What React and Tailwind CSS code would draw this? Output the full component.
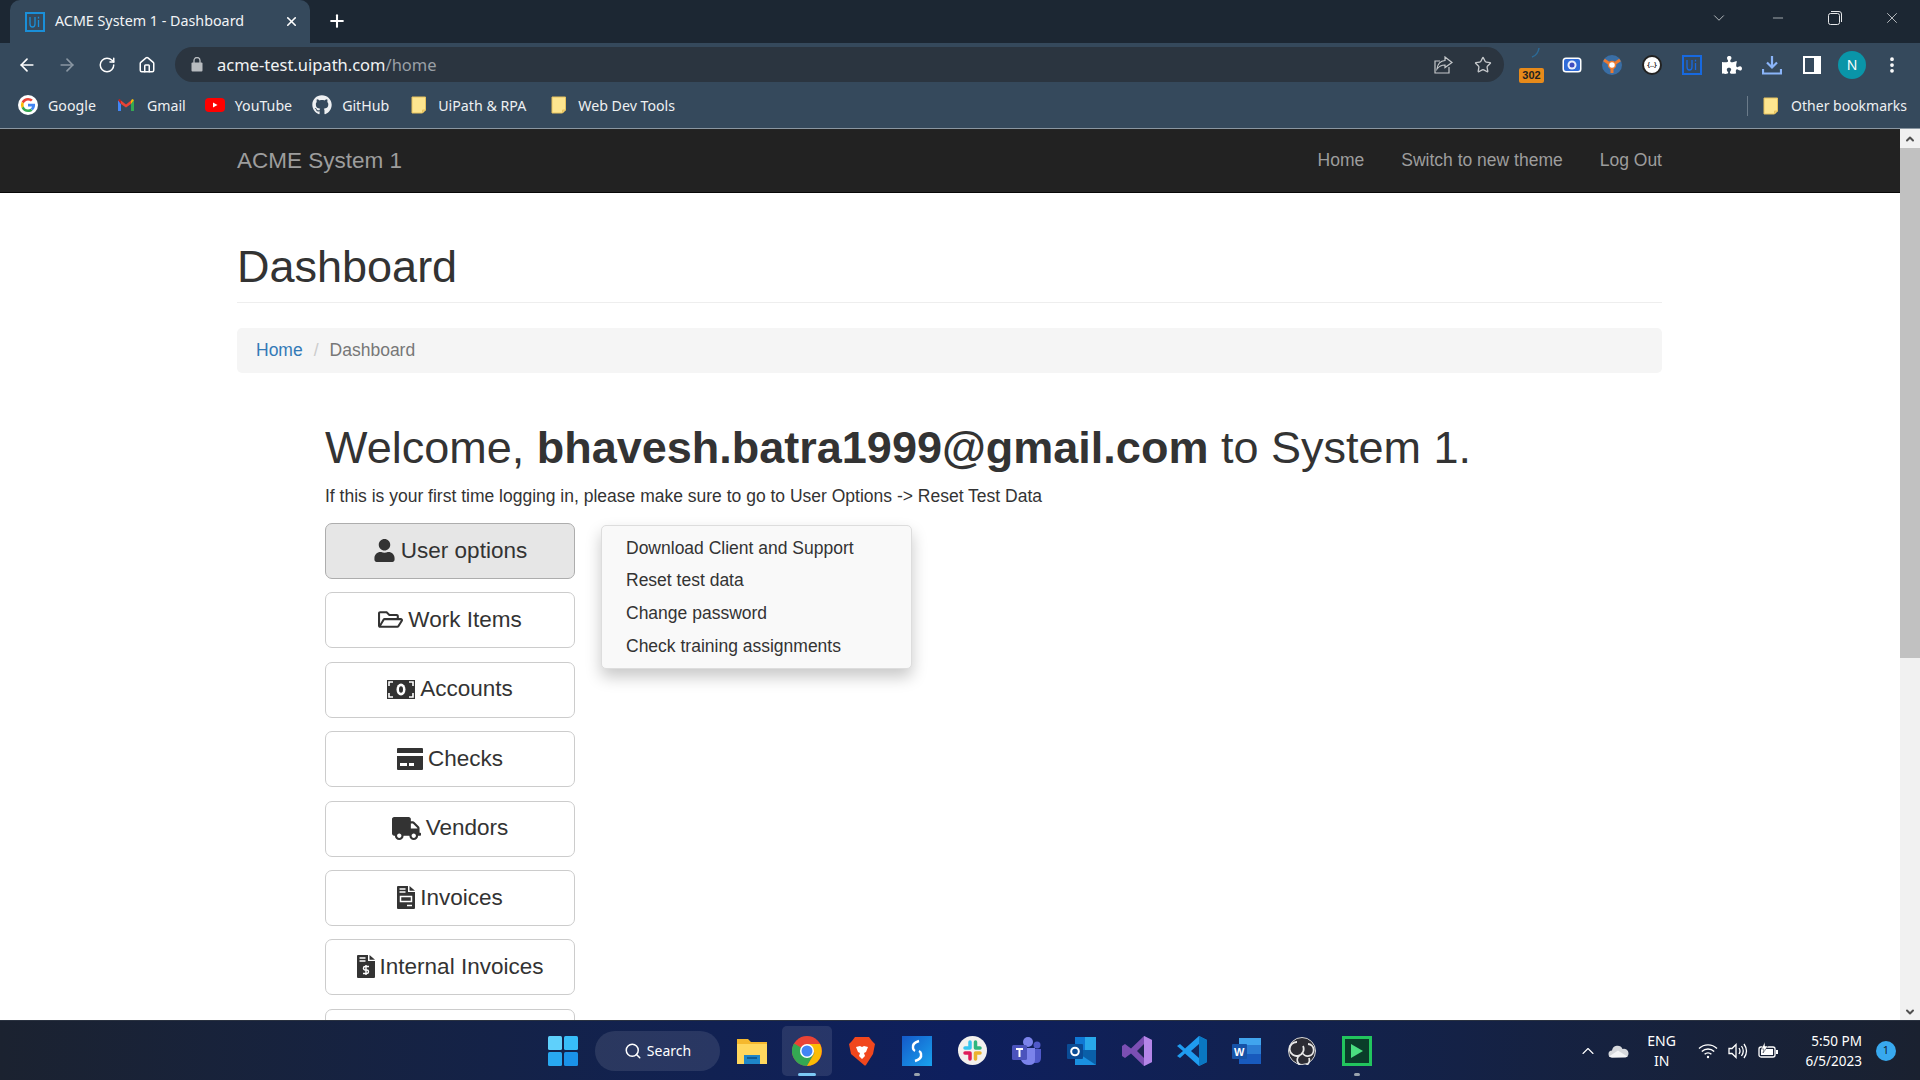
import { FaUser, FaRegFolderOpen, FaTruck, FaGithub, FaPuzzlePiece } from 'react-icons/fa';
import { ArrowLeft, ArrowRight, RotateCw, Home, Star, X, Plus, ChevronDown, ChevronUp, Minus, Search, MoreVertical } from 'lucide-react';

function MoneyGlyph() {
  return (
    <svg width="28" height="19" viewBox="0 0 28 19">
      <rect width="28" height="19" fill="#333" />
      <ellipse cx="14" cy="9.500" rx="4.500" ry="6" fill="#fff" />
      <ellipse cx="14" cy="9.500" rx="2" ry="3.200" fill="#333" />
      <path d="M2 6V2h4M22 2h4v4M26 13v4h-4M6 17H2v-4" fill="none" stroke="#fff" strokeWidth="1.600" />
    </svg>
  );
}

function CardGlyph() {
  return (
    <svg width="26" height="22" viewBox="0 0 26 22">
      <path d="M1 0h24a1 1 0 0 1 1 1v4H0V1a1 1 0 0 1 1-1z" fill="#333" />
      <path d="M0 8h26v13a1 1 0 0 1-1 1H1a1 1 0 0 1-1-1z" fill="#333" />
      <rect x="3" y="15" width="7" height="3" fill="#fff" />
      <rect x="12" y="15" width="5" height="3" fill="#fff" />
    </svg>
  );
}

function InvoiceGlyph() {
  return (
    <svg width="18" height="23" viewBox="0 0 18 23">
      <path d="M0 1a1 1 0 0 1 1-1h10v6h7v16a1 1 0 0 1-1 1H1a1 1 0 0 1-1-1z" fill="#333" />
      <path d="M12.500 0L18 4.800h-5.500z" fill="#333" />
      <path d="M2.500 3h6M2.500 6h6" stroke="#fff" strokeWidth="1.500" />
      <rect x="3.500" y="10.500" width="11" height="5" fill="none" stroke="#fff" strokeWidth="1.500" />
      <path d="M10 19.500h5" stroke="#fff" strokeWidth="1.500" />
    </svg>
  );
}

function DollarInvoiceGlyph() {
  return (
    <svg width="18" height="23" viewBox="0 0 18 23">
      <path d="M0 1a1 1 0 0 1 1-1h10v6h7v16a1 1 0 0 1-1 1H1a1 1 0 0 1-1-1z" fill="#333" />
      <path d="M12.500 0L18 4.800h-5.500z" fill="#333" />
      <path d="M2.500 3h6M2.500 6h6" stroke="#fff" strokeWidth="1.500" />
      <path d="M12 11.500H8.200a1.700 1.700 0 0 0 0 3.500h1.600a1.700 1.700 0 0 1 0 3.500H6M9 10v10" fill="none" stroke="#fff" strokeWidth="1.400" />
    </svg>
  );
}

const menuButtons = [
  { label: 'User options', icon: <FaUser size={23} />, active: true },
  { label: 'Work Items', icon: <FaRegFolderOpen size={25} /> },
  { label: 'Accounts', icon: <MoneyGlyph /> },
  { label: 'Checks', icon: <CardGlyph /> },
  { label: 'Vendors', icon: <FaTruck size={29} /> },
  { label: 'Invoices', icon: <InvoiceGlyph /> },
  { label: 'Internal Invoices', icon: <DollarInvoiceGlyph /> },
  { label: '', icon: null },
];

const dropdownItems = [
  'Download Client and Support',
  'Reset test data',
  'Change password',
  'Check training assignments',
];

function UiLogo({ size = 20, color = '#1a8fd8' }) {
  return (
    <svg width={size} height={size} viewBox="0 0 20 20">
      <rect x="1" y="1" width="18" height="18" fill="none" stroke={color} strokeWidth="2" />
      <path d="M5 5v7q0 3 2.500 3T10 12V5" fill="none" stroke={color} strokeWidth="1.300" />
      <path d="M13.500 8v7M13.500 4.800v1.600" fill="none" stroke={color} strokeWidth="1.300" />
    </svg>
  );
}

function FolderIcon() {
  return (
    <svg width="16" height="18" viewBox="0 0 16 18">
      <path d="M1 1h13.500v13l-3 3H1z" fill="#fde58f" stroke="#e6c25f" />
      <path d="M11.500 17v-3h3" fill="#f3d070" stroke="#e6c25f" />
    </svg>
  );
}

function GoogleIcon() {
  return (
    <svg width="20" height="20" viewBox="0 0 48 48">
      <circle cx="24" cy="24" r="24" fill="#fff" />
      <path fill="#ea4335" d="M24 13c3 0 5.300 1 7 2.700l4.400-4.400C32.600 8.700 28.700 7 24 7c-6.600 0-12.400 3.800-15.200 9.400l5.200 4C15.300 16.200 19.300 13 24 13z" />
      <path fill="#4285f4" d="M41 24.500c0-1.200-.1-2.300-.3-3.500H24v6.600h9.600c-.4 2.200-1.700 4-3.600 5.300l5 3.900c3.100-2.800 6-7.200 6-12.300z" />
      <path fill="#fbbc05" d="M14 27.600a10.500 10.500 0 0 1 0-7.200l-5.200-4a17 17 0 0 0 0 15.200z" />
      <path fill="#34a853" d="M24 41c4.600 0 8.500-1.500 11-4.100l-5-3.900c-1.500 1-3.500 1.700-6 1.700-4.700 0-8.700-3.200-10-7.300l-5.200 4C11.600 37.200 17.400 41 24 41z" />
    </svg>
  );
}

function GmailIcon() {
  return (
    <svg width="18" height="18" viewBox="0 0 18 18">
      <path d="M1 4v11h3V8z" fill="#4285f4" />
      <path d="M14 8v7h3V4z" fill="#34a853" />
      <path d="M4 8l5 3.500L14 8V4.500L9 8.500 4 4.500z" fill="#ea4335" />
      <path d="M1 4l3 4V4.500L2.800 3z" fill="#c5221f" />
      <path d="M17 4l-3 4V4.500L15.200 3z" fill="#fbbc05" />
    </svg>
  );
}

function YoutubeIcon() {
  return (
    <svg width="20" height="20" viewBox="0 0 20 20">
      <rect x="0" y="3" width="20" height="14" rx="4" fill="#f00" />
      <path d="M8 7.500v5l4.500-2.500z" fill="#fff" />
    </svg>
  );
}

function ExtensionIcons() {
  return (
    <>
      <div className="relative flex h-8 w-10 justify-center">
        <svg width="24" height="18" viewBox="0 0 24 18" className="mt-[-2px]">
          <path d="M19 1q-1 7-7 9" fill="none" stroke="#2c6a96" strokeWidth="1.500" />
        </svg>
        <span className="absolute bottom-[-2px] left-[7px] h-[15px] w-[25px] rounded-[2px] bg-[#e78a1a] text-center text-[11px] font-bold leading-[15px] text-[#222] [font-family:'Liberation_Sans',sans-serif]">
          302
        </span>
      </div>
      <div className="flex w-10 justify-center">
        <svg width="20" height="18" viewBox="0 0 20 18">
          <rect x="0.500" y="1.500" width="19" height="15" rx="3.500" fill="#fff" />
          <rect x="2" y="3" width="16" height="12" rx="2" fill="#2f6bd8" />
          <circle cx="10" cy="9" r="4.500" fill="#e9eefb" />
          <circle cx="10" cy="9" r="2.500" fill="#3e4cc0" />
        </svg>
      </div>
      <div className="flex w-10 justify-center">
        <svg width="20" height="20" viewBox="0 0 20 20">
          <circle cx="10" cy="10" r="10" fill="#3a6ea5" />
          <path d="M2 5l6 4M18 5l-6 4M10 12v6" stroke="#ee7a30" strokeWidth="3" />
          <circle cx="10" cy="10" r="3.500" fill="#fff" stroke="#ee7a30" strokeWidth="1.500" />
        </svg>
      </div>
      <div className="flex w-10 justify-center">
        <span className="flex h-5 w-5 items-center justify-center rounded-full border-2 border-[#222] bg-white text-[7px] font-bold leading-none text-[#333]">
          {'{..}'}
        </span>
      </div>
      <div className="flex w-10 justify-center">
        <UiLogo color="#1769e0" />
      </div>
      <div className="flex w-10 justify-center text-white">
        <FaPuzzlePiece size={20} />
      </div>
      <div className="flex w-10 justify-center">
        <svg width="20" height="20" viewBox="0 0 20 20" fill="none" stroke="#8ab4f8" strokeWidth="2.200">
          <path d="M10 1v11M5 7.500l5 5 5-5" />
          <path d="M1 14v4.500h18V14" />
        </svg>
      </div>
      <div className="flex w-10 justify-center">
        <svg width="18" height="18" viewBox="0 0 18 18">
          <rect width="18" height="18" fill="#fff" />
          <rect x="2" y="2" width="9" height="14" fill="#35495c" />
        </svg>
      </div>
      <div className="flex w-10 justify-center">
        <span className="flex h-7 w-7 items-center justify-center rounded-full bg-[#0a95a8] text-[14px] text-white">
          N
        </span>
      </div>
      <div className="flex w-10 justify-center text-white">
        <MoreVertical size={20} strokeWidth={2.500} />
      </div>
    </>
  );
}

function BrowserChrome() {
  return (
    <header className="shrink-0 bg-[#35495c] text-white [font-family:'Noto_Sans',sans-serif]">
      {/* tab strip */}
      <div className="flex h-[43px] items-end bg-[#1c2733]">
        <div className="ml-[10px] flex h-[43px] w-[300px] items-center rounded-t-[10px] bg-[#35495c] pl-[15px] pr-[11px]">
          <UiLogo />
          <span className="ml-[10px] flex-1 pb-[1px] text-[14.300px] text-[#f2f4f6]">ACME System 1 - Dashboard</span>
          <X size={15} strokeWidth={2.500} />
        </div>
        <Plus className="mb-[12px] ml-[17px]" size={20} strokeWidth={2.500} />
        <div className="mb-[16px] ml-auto flex items-center text-[#e6e8ea]">
          <ChevronDown size={18} strokeWidth={1} />
          <div className="ml-[21px] flex w-[57px] justify-center"><Minus size={16} strokeWidth={1} /></div>
          <div className="flex w-[57px] justify-center">
            <svg width="14" height="14" viewBox="0 0 14 14" fill="none" stroke="#e6e8ea">
              <rect x="0.500" y="2.500" width="11" height="11" rx="2" />
              <path d="M3 0.500h8a2.500 2.500 0 0 1 2.500 2.500v8" />
            </svg>
          </div>
          <div className="flex w-[57px] justify-center"><X size={18} strokeWidth={1} /></div>
        </div>
      </div>

      {/* toolbar */}
      <div className="flex h-[43px] items-center">
        <div className="flex w-[175px] shrink-0 items-center pl-[7px]">
          <div className="flex w-10 justify-center"><ArrowLeft size={20} /></div>
          <div className="flex w-10 justify-center text-[#8a97a3]"><ArrowRight size={20} /></div>
          <div className="flex w-10 justify-center"><RotateCw size={18} /></div>
          <div className="flex w-10 justify-center"><Home size={18} /></div>
        </div>
        <div className="flex h-[35px] w-[1329px] shrink-0 items-center rounded-full bg-[#2b3540] pl-[16px]">
          <svg width="12" height="15" viewBox="0 0 12 15" fill="#b8bcc0">
            <rect x="0.500" y="5.500" width="11" height="9" rx="1" />
            <path d="M3 6V3.500a3 3 0 0 1 6 0V6" fill="none" stroke="#b8bcc0" strokeWidth="1.300" />
          </svg>
          <span className="ml-[14px] pt-[2px] text-[16.500px] text-[#f1f3f4]">
            acme-test.uipath.com<span className="text-[#9aa0a6]">/home</span>
          </span>
          <div className="ml-auto mr-[12px] flex items-center gap-[21px] text-[#c5c8cb]">
            <svg width="19" height="18" viewBox="0 0 19 18" fill="none" stroke="#c5c8cb" strokeWidth="1.200">
              <path d="M15 11v6H1V5h5" />
              <path d="M11 1l7 5.500-7 5V9q-5 0-8 4 1-8 8-8.500z" />
            </svg>
            <Star size={18} strokeWidth={1.800} />
          </div>
        </div>
        <div className="ml-[8px] flex items-center">
          <ExtensionIcons />
        </div>
      </div>

      {/* bookmarks bar */}
      <div className="flex h-[43px] items-center border-b border-[#8a96a1] pb-[3px] pl-[18px] pr-[13px] text-[14.200px] text-[#eef0f2]">
        <div className="flex items-center gap-[10px]"><GoogleIcon /><span>Google</span></div>
        <div className="ml-[21px] flex items-center gap-[12px]"><GmailIcon /><span>Gmail</span></div>
        <div className="ml-[19px] flex items-center gap-[10px]"><YoutubeIcon /><span>YouTube</span></div>
        <div className="ml-[20px] flex items-center gap-[10px]"><FaGithub size={20} /><span>GitHub</span></div>
        <div className="ml-[22px] flex items-center gap-[11px]"><FolderIcon /><span>UiPath &amp; RPA</span></div>
        <div className="ml-[25px] flex items-center gap-[11px]"><FolderIcon /><span>Web Dev Tools</span></div>
        <div className="ml-auto flex items-center">
          <div className="mr-[15px] h-[20px] w-px bg-[#6b7b8a]" />
          <FolderIcon />
          <span className="ml-[12px] text-[14px]">Other bookmarks</span>
        </div>
      </div>
    </header>
  );
}

function Scrollbar() {
  return (
    <div className="flex w-5 shrink-0 flex-col items-center bg-[#f1f1f1]">
      <ChevronUp size={12} strokeWidth={4} className="mt-[4px] text-[#505050]" />
      <div className="mt-[3px] h-[510px] w-full bg-[#c1c1c1]" />
      <ChevronDown size={12} strokeWidth={4} className="mb-[2px] mt-auto text-[#505050]" />
    </div>
  );
}

function Page() {
  return (
    <div className="min-w-0 flex-1 overflow-hidden bg-white text-[#333] [font-family:'Liberation_Sans',sans-serif]">
      <nav className="h-[64px] border-b border-[#080808] bg-[#222] text-[#9d9d9d]">
        <div className="ml-[237px] flex h-full w-[1425px] items-center justify-between">
          <span className="text-[22.500px]">ACME System 1</span>
          <div className="flex gap-[37px] text-[17.500px]">
            <span>Home</span>
            <span>Switch to new theme</span>
            <span>Log Out</span>
          </div>
        </div>
      </nav>

      <div className="ml-[237px] w-[1425px]">
        <div className="border-b border-[#eee] pb-[8px] pt-[47px]">
          <h1 className="text-[45px] leading-[54px]">Dashboard</h1>
        </div>
        <div className="mt-[25px] flex h-[45px] items-center rounded-[5px] bg-[#f5f5f5] px-[19px] text-[17.500px]">
          <span className="text-[#337ab7]">Home</span>
          <span className="px-[11px] text-[#ccc]">/</span>
          <span className="text-[#777]">Dashboard</span>
        </div>

        <div className="pl-[88px]">
          <h2 className="mt-[48px] text-[45px] leading-[54px]">
            Welcome, <b>bhavesh.batra1999@gmail.com</b> to System 1.
          </h2>
          <p className="mt-[9px] text-[17.500px] leading-[25px]">
            If this is your first time logging in, please make sure to go to User Options -&gt; Reset Test Data
          </p>

          <div className="mt-[14px] flex items-start">
            <div className="flex w-[250px] flex-col gap-[13.300px]">
              {menuButtons.map(({ label, icon, active }) => (
                <button
                  key={label}
                  className={`flex h-[56.100px] items-center justify-center gap-[5px] rounded-[7px] border pb-[1px] text-[22.500px] ${
                    active ? 'border-[#adadad] bg-[#e6e6e6]' : 'border-[#ccc] bg-white'
                  }`}
                >
                  {icon}
                  {label}
                </button>
              ))}
            </div>
            <div className="ml-[26px] mt-[1.500px] w-[311px] rounded-[5px] border border-[#ddd] bg-[#f9f9f9] py-[6px] pl-[24px] text-[17.500px] leading-[32.700px] shadow-[0_8px_16px_rgba(0,0,0,0.22)]">
              {dropdownItems.map((item) => (
                <div key={item}>{item}</div>
              ))}
            </div>
          </div>
        </div>
      </div>
    </div>
  );
}

function Slot({ children, active, dot }) {
  return (
    <div className={`relative flex h-[50px] w-[50px] items-center justify-center rounded-[5px] ${active ? 'bg-white/10' : ''}`}>
      {children}
      {active && <span className="absolute bottom-0 left-1/2 h-[3px] w-[18px] -translate-x-1/2 rounded-full bg-[#7cc8f5]" />}
      {dot && <span className="absolute bottom-0 left-1/2 h-[3px] w-[6px] -translate-x-1/2 rounded-full bg-[#9aa3ad]" />}
    </div>
  );
}

function TaskbarIcons() {
  return (
    <div className="flex items-center gap-[5px]">
      {/* file explorer */}
      <Slot>
        <svg width="32" height="30" viewBox="0 0 32 30">
          <path d="M1 3h11l3 3h16v22H1z" fill="#f5b82e" />
          <path d="M1 8h30v20H1z" fill="#ffd75e" />
          <rect x="8" y="19" width="16" height="9" fill="#1e86c9" />
          <rect x="11" y="21" width="10" height="2" fill="#0f5c96" />
        </svg>
      </Slot>
      {/* chrome */}
      <Slot active>
        <svg width="30" height="30" viewBox="0 0 30 30">
          <circle cx="15" cy="15" r="15" fill="#ea4335" />
          <path d="M15 15L2 7.500A15 15 0 0 0 15 30l7.500-13z" fill="#34a853" />
          <path d="M15 8h13a15 15 0 0 1-13 22l7.500-13z" fill="#fbbc05" />
          <circle cx="15" cy="15" r="7" fill="#fff" />
          <circle cx="15" cy="15" r="5.500" fill="#4285f4" />
        </svg>
      </Slot>
      {/* brave */}
      <Slot>
        <svg width="26" height="30" viewBox="0 0 26 30">
          <path d="M6 1h14l3 4 3 3-2 10-7 11q-1 1-2 0L2 18 0 8l3-3z" fill="#f1471d" />
          <path d="M7 11l4-1 2 1 2-1 4 1-2 5-2 1 1 3-3 3-3-3 1-3-2-1z" fill="#fff" />
        </svg>
      </Slot>
      {/* S app */}
      <Slot dot>
        <svg width="30" height="30" viewBox="0 0 30 30">
          <defs>
            <linearGradient id="sapp" x1="0" y1="0" x2="1" y2="1">
              <stop offset="0" stopColor="#1459c9" />
              <stop offset="1" stopColor="#19a2ee" />
            </linearGradient>
          </defs>
          <rect width="30" height="30" fill="url(#sapp)" />
          <path d="M17 5q-7 2-6 7 0 2 2 3M13 25q7-2 6-7 0-2-2-3" fill="none" stroke="#fff" strokeWidth="2.500" />
        </svg>
      </Slot>
      {/* slack */}
      <Slot>
        <svg width="29" height="29" viewBox="0 0 29 29">
          <circle cx="14.500" cy="14.500" r="14.500" fill="#f3f1ee" />
          <path d="M12 6v6M7 12h5" stroke="#36c5f0" strokeWidth="3.500" strokeLinecap="round" />
          <path d="M17.500 6v6M17.500 12H22" stroke="#2eb67d" strokeWidth="3.500" strokeLinecap="round" />
          <path d="M17.500 17v6M17.500 17H22" stroke="#ecb22e" strokeWidth="3.500" strokeLinecap="round" />
          <path d="M12 17v6M7 17h5" stroke="#e01e5a" strokeWidth="3.500" strokeLinecap="round" />
        </svg>
      </Slot>
      {/* teams */}
      <Slot>
        <svg width="30" height="30" viewBox="0 0 30 30">
          <circle cx="16" cy="6" r="5" fill="#7b83eb" />
          <circle cx="25" cy="9" r="3.500" fill="#5059c9" />
          <path d="M20 13h9v9q0 5-5 5h-4z" fill="#5059c9" />
          <path d="M9 12h14v12q0 5-6 5-6 0-8-5z" fill="#7b83eb" />
          <rect x="0" y="9" width="15" height="15" rx="1.500" fill="#4b53bc" />
          <path d="M4 13h7M7.500 13v8" stroke="#fff" strokeWidth="2" />
        </svg>
      </Slot>
      {/* outlook */}
      <Slot>
        <svg width="30" height="30" viewBox="0 0 30 30">
          <rect x="8" y="1" width="21" height="14" fill="#0f78d4" />
          <rect x="18" y="1" width="11" height="14" fill="#28a8ea" />
          <path d="M8 14h21v15H8z" fill="#0a5fa8" />
          <path d="M8 15l21 14H8z" fill="#1a90e0" />
          <rect x="0" y="8" width="16" height="15" rx="1" fill="#0a4c96" />
          <circle cx="8" cy="15.500" r="3.800" fill="none" stroke="#fff" strokeWidth="2" />
        </svg>
      </Slot>
      {/* visual studio */}
      <Slot>
        <svg width="30" height="32" viewBox="0 0 30 32">
          <path d="M22 1l8 4v22l-8 4-13-12.500L3 23l-3-2V11l3-2 6 4.500z" fill="#7b4fb3" />
          <path d="M22 9l-7 7 7 7z" fill="#1c2550" />
          <path d="M22 1l8 4v22l-8 4z" fill="#b586e8" />
        </svg>
      </Slot>
      {/* vscode */}
      <Slot>
        <svg width="30" height="32" viewBox="0 0 30 32">
          <path d="M22 1l8 4v22l-8 4-14-12.500L3 23l-3-2 6-5-6-5 3-2 5 4.500z" fill="#1f9cf0" />
          <path d="M22 9l-8 7 8 7z" fill="#12275c" />
          <path d="M22 1l8 4v22l-8 4z" fill="#0a77c2" />
        </svg>
      </Slot>
      {/* word */}
      <Slot>
        <svg width="30" height="30" viewBox="0 0 30 30">
          <rect x="7" y="2" width="22" height="26" rx="1" fill="#2b7cd3" />
          <rect x="7" y="2" width="22" height="7" fill="#41a5ee" />
          <rect x="7" y="18" width="22" height="10" fill="#185abd" />
          <rect x="0" y="8" width="15" height="15" rx="1" fill="#1653a8" />
          <text x="2" y="20" fontSize="11" fontWeight="700" fill="#fff" fontFamily="Liberation Sans, sans-serif">W</text>
        </svg>
      </Slot>
      {/* obs */}
      <Slot>
        <svg width="28" height="28" viewBox="0 0 28 28">
          <circle cx="14" cy="14" r="13.500" fill="#2c2c34" stroke="#d8d8d8" />
          <path d="M9 5a7 7 0 1 0 6 4M20 7a6 6 0 1 1-6 8M21 21a6 6 0 1 1-9-3" fill="none" stroke="#e8e8e8" strokeWidth="1.800" />
        </svg>
      </Slot>
      {/* green player */}
      <Slot dot>
        <div className="flex h-[30px] w-[30px] items-center justify-center border-[3px] border-[#22c55e] bg-[#0a3d2a]">
          <svg width="14" height="16" viewBox="0 0 14 16">
            <path d="M1 1l12 7-12 7z" fill="#4ade80" />
          </svg>
        </div>
      </Slot>
    </div>
  );
}

function Taskbar() {
  return (
    <footer className="flex h-[60px] shrink-0 items-center border-t border-[#2a3240] bg-gradient-to-r from-[#1b2230] via-[#0e1f5e] to-[#1a2130] pl-[548px] text-white [font-family:'Noto_Sans',sans-serif]">
      <svg width="30" height="30" viewBox="0 0 30 30">
        <rect x="0" y="0" width="14" height="14" rx="1.500" fill="#5fd0fb" />
        <rect x="16" y="0" width="14" height="14" rx="1.500" fill="#38bdf8" />
        <rect x="0" y="16" width="14" height="14" rx="1.500" fill="#28a8f0" />
        <rect x="16" y="16" width="14" height="14" rx="1.500" fill="#1a92e8" />
      </svg>
      <div className="ml-[17px] flex h-[40px] w-[125px] items-center justify-center gap-[5px] rounded-full bg-white/10 text-[14px]">
        <Search size={18} />
        Search
      </div>
      <div className="ml-[7px]">
        <TaskbarIcons />
      </div>

      <div className="ml-auto flex items-center">
        <ChevronUp size={20} strokeWidth={1.300} />
        <svg width="21" height="14" viewBox="0 0 21 14" className="ml-[10px]">
          <path d="M4 13.500a3.500 3.500 0 0 1 0-7 5.500 5.500 0 0 1 10.500-1.500 4.500 4.500 0 0 1 6 4 4.500 4.500 0 0 1-3 4.500z" fill="#d6d8dc" />
          <path d="M1 12.500l9-6 10 6.500-16 .5z" fill="#f4f5f6" />
        </svg>
        <div className="ml-[5px] w-[56px] text-center text-[14px] leading-[20px]">
          <div>ENG</div>
          <div>IN</div>
        </div>
        <svg width="20" height="16" viewBox="0 0 20 16" fill="none" stroke="#fff" strokeWidth="1.400" className="ml-[8px]">
          <path d="M1 5.500a13 13 0 0 1 18 0M3.800 8.500a9 9 0 0 1 12.400 0M6.600 11.300a5 5 0 0 1 6.800 0" />
          <circle cx="10" cy="14" r="1.200" fill="#fff" stroke="none" />
        </svg>
        <svg width="20" height="18" viewBox="0 0 20 18" fill="none" stroke="#fff" strokeWidth="1.300" className="ml-[10px]">
          <path d="M1 6.500h3l4-4v13l-4-4H1z" />
          <path d="M11 6q2 3 0 6M13.500 4q3.500 5 0 10M16 2q5 7 0 14" />
        </svg>
        <svg width="21" height="18" viewBox="0 0 21 18" className="ml-[10px]">
          <rect x="1" y="5" width="16" height="10" rx="2" fill="none" stroke="#fff" strokeWidth="1.300" />
          <rect x="3" y="7" width="12" height="6" fill="#fff" />
          <rect x="18" y="8" width="2" height="4" fill="#fff" />
          <path d="M7 0L3 7h3l-1 4 5-7H7z" fill="#fff" stroke="#1a2130" strokeWidth="0.500" />
        </svg>
        <div className="ml-[27px] text-right text-[13.500px] leading-[20px]">
          <div>5:50 PM</div>
          <div>6/5/2023</div>
        </div>
        <span className="ml-[14px] mr-[24px] flex h-5 w-5 items-center justify-center rounded-full bg-[#38a9ef] text-[11px] text-[#10202f]">
          1
        </span>
      </div>
    </footer>
  );
}

export default function App() {
  return (
    <div className="flex h-[1080px] w-[1920px] flex-col overflow-hidden">
      <BrowserChrome />
      <div className="flex min-h-0 flex-1">
        <Page />
        <Scrollbar />
      </div>
      <Taskbar />
    </div>
  );
}
